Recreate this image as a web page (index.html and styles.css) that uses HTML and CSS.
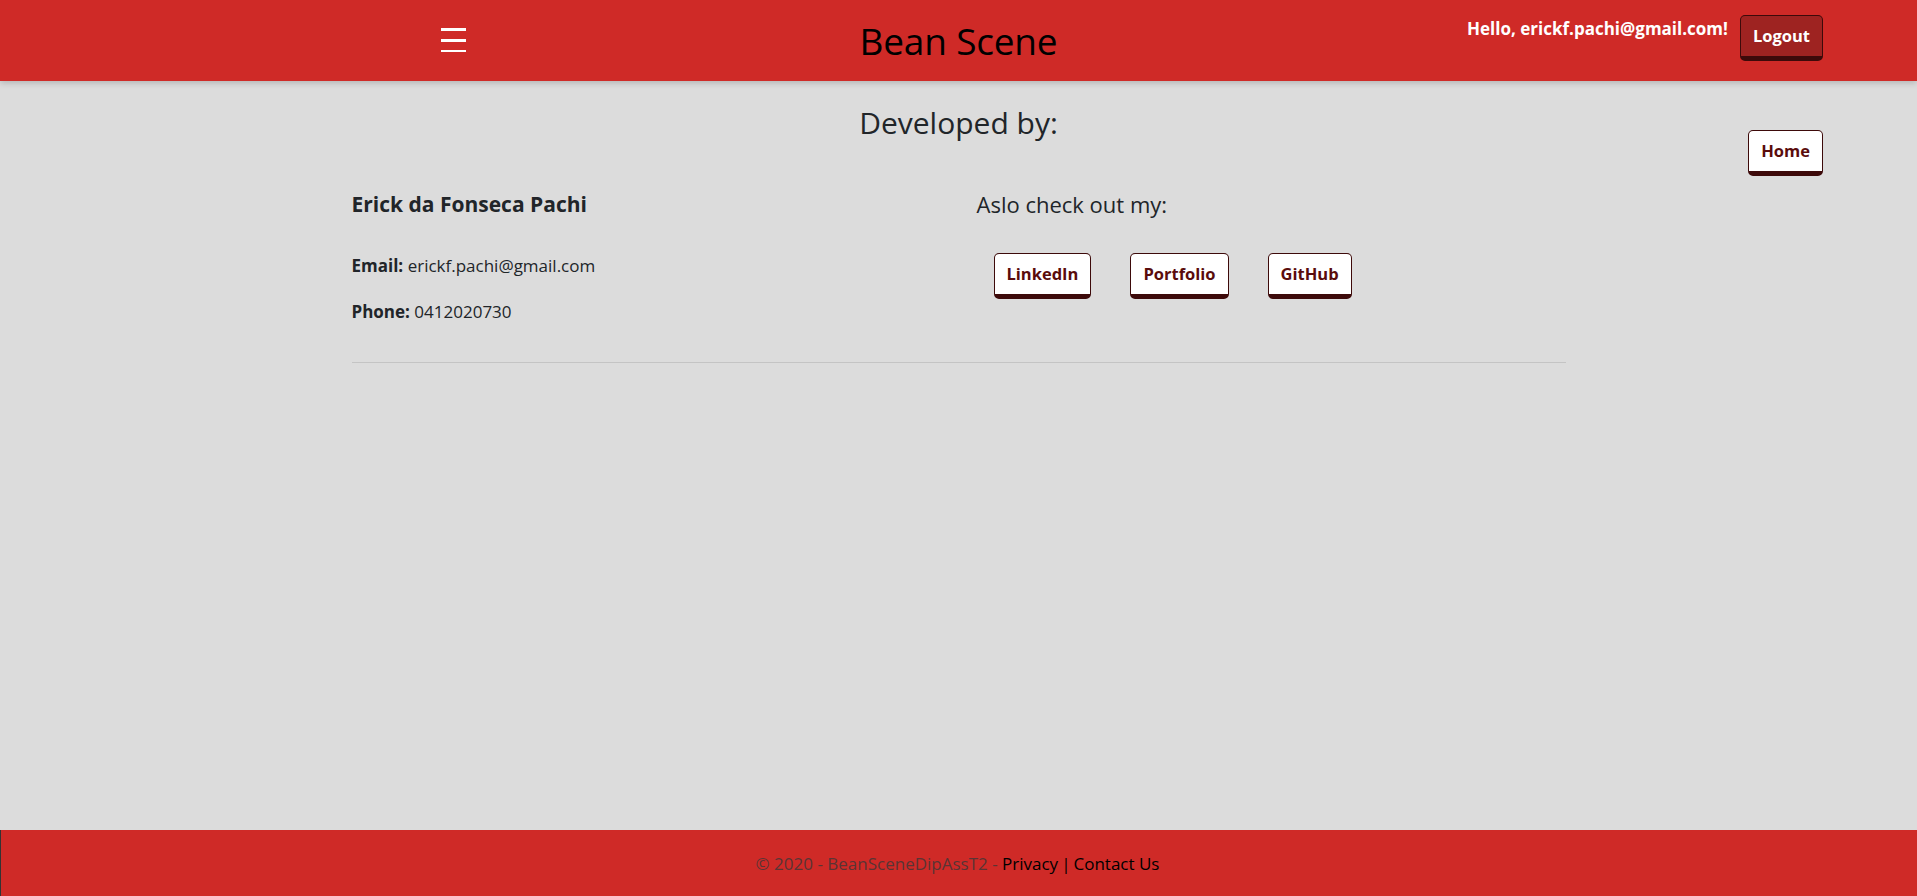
FILE: index.html
```html
<!DOCTYPE html>
<html lang="en">
<head>
<meta charset="utf-8">
<title>About - Bean Scene</title>
<link rel="stylesheet" href="styles.css">
</head>
<body>
<header class="topbar">
  <div class="topbar-left">
    <button class="menu-toggle" aria-label="Menu">
      <svg width="25" height="25" viewBox="0 0 25 25"><rect x="0" y="1" width="25" height="3" fill="#fff"/><rect x="0" y="12" width="25" height="3" fill="#fff"/><rect x="0" y="23" width="25" height="3" fill="#fff"/></svg>
    </button>
  </div>
  <div class="brand">Bean Scene</div>
  <div class="topbar-right">
    <span class="hello">Hello, erickf.pachi@gmail.com!</span>
    <a class="btn btn-dark">Logout</a>
  </div>
</header>

<main class="page">
  <div class="page-spacer"></div>
  <div class="container">
    <h3 class="title">Developed by:</h3>
    <div class="row">
      <div class="col">
        <h5 class="name">Erick da Fonseca Pachi</h5>
        <p class="line"><strong>Email:</strong> erickf.pachi@gmail.com</p>
        <p class="line"><strong>Phone:</strong> 0412020730</p>
      </div>
      <div class="col">
        <h5 class="check">Aslo check out my:</h5>
        <div class="links">
          <a class="btn btn-light">LinkedIn</a>
          <a class="btn btn-light">Portfolio</a>
          <a class="btn btn-light">GitHub</a>
        </div>
      </div>
    </div>
    <hr class="rule">
  </div>
  <div class="page-side">
    <a class="btn btn-light btn-home">Home</a>
  </div>
</main>

<footer class="footer">
  <span class="muted">© 2020 - BeanSceneDipAssT2 - </span><a class="flink">Privacy</a> | <a class="flink">Contact Us</a>
</footer>
</body>
</html>
```

FILE: styles.css
```css
* { box-sizing: border-box; }
html, body { height: 100%; }
body {
  margin: 0;
  display: flex;
  flex-direction: column;
  min-height: 896px;
  height: 100vh;
  background: #dcdcdc;
  color: #212529;
  font-family: "Open Sans", "Noto Sans", "Liberation Sans", sans-serif;
  font-size: 16px;
}

.topbar {
  position: relative;
  z-index: 2;
  flex: 0 0 81px;
  height: 81px;
  background: #cf2a27;
  display: grid;
  grid-template-columns: 1fr auto 1fr;
  align-items: center;
  padding: 0 94px;
  box-shadow: 0 2px 6px rgba(0,0,0,0.18);
}
.topbar-left { display: flex; align-items: center; }
.menu-toggle {
  margin-left: 347px;
  background: none;
  border: 0;
  padding: 0;
  width: 25px;
  height: 27px;
  display: flex;
  cursor: pointer;
}
.brand {
  font-size: 37px;
  line-height: 44px;
  color: #000;
  letter-spacing: -0.2px;
}
.topbar-right {
  align-self: start;
  padding-top: 15px;
  display: flex;
  justify-content: flex-end;
  align-items: flex-start;
  gap: 12px;
}
.hello {
  color: #fff;
  font-weight: 700;
  font-size: 17px;
  line-height: 24px;
  padding-top: 2px;
}

.btn {
  display: inline-block;
  font-weight: 700;
  font-size: 16.5px;
  line-height: 24px;
  padding: 8px 12px;
  border: 1px solid #3d0a0a;
  border-bottom-width: 5px;
  border-radius: 5px;
  text-decoration: none;
  cursor: pointer;
}
.btn-dark { background: #9e2321; color: #fff; }
.btn-light { background: #fff; color: #5a0c0c; }

.page {
  flex: 1;
  display: grid;
  grid-template-columns: 1fr 1214px 1fr;
  align-items: start;
}
.container { padding-top: 25px; }
.title {
  margin: 0;
  text-align: center;
  font-size: 30px;
  line-height: 34px;
  font-weight: 500;
}
.row {
  display: grid;
  grid-template-columns: 1fr 1fr;
  column-gap: 36px;
  margin-top: 52px;
}
.name, .check {
  margin: 0;
  line-height: 24px;
}
.name { font-weight: 700; font-size: 21px; }
.check { font-weight: 400; font-size: 22px; }
.line {
  margin: 0 0 22px;
  line-height: 24px;
  font-size: 17px;
}
.name + .line { margin-top: 38px; }
.links {
  display: flex;
  gap: 39px;
  margin: 37px 0 0 17px;
}
.rule {
  margin: 16px 0 0;
  border: 0;
  border-top: 1px solid #c4c4c4;
}
.page-side {
  display: flex;
  justify-content: flex-end;
  padding: 49px 94px 0 0;
}

.footer {
  flex: 0 0 66px;
  height: 66px;
  background: #cf2a27;
  border-left: 1px solid #333;
  display: flex;
  align-items: center;
  justify-content: center;
  font-size: 17px;
  color: #000;
}
.muted { color: #5a3434; white-space: pre; }
.flink { color: #000; text-decoration: none; margin: 0 3px; }
.flink:first-of-type { margin-left: 0; }
```
